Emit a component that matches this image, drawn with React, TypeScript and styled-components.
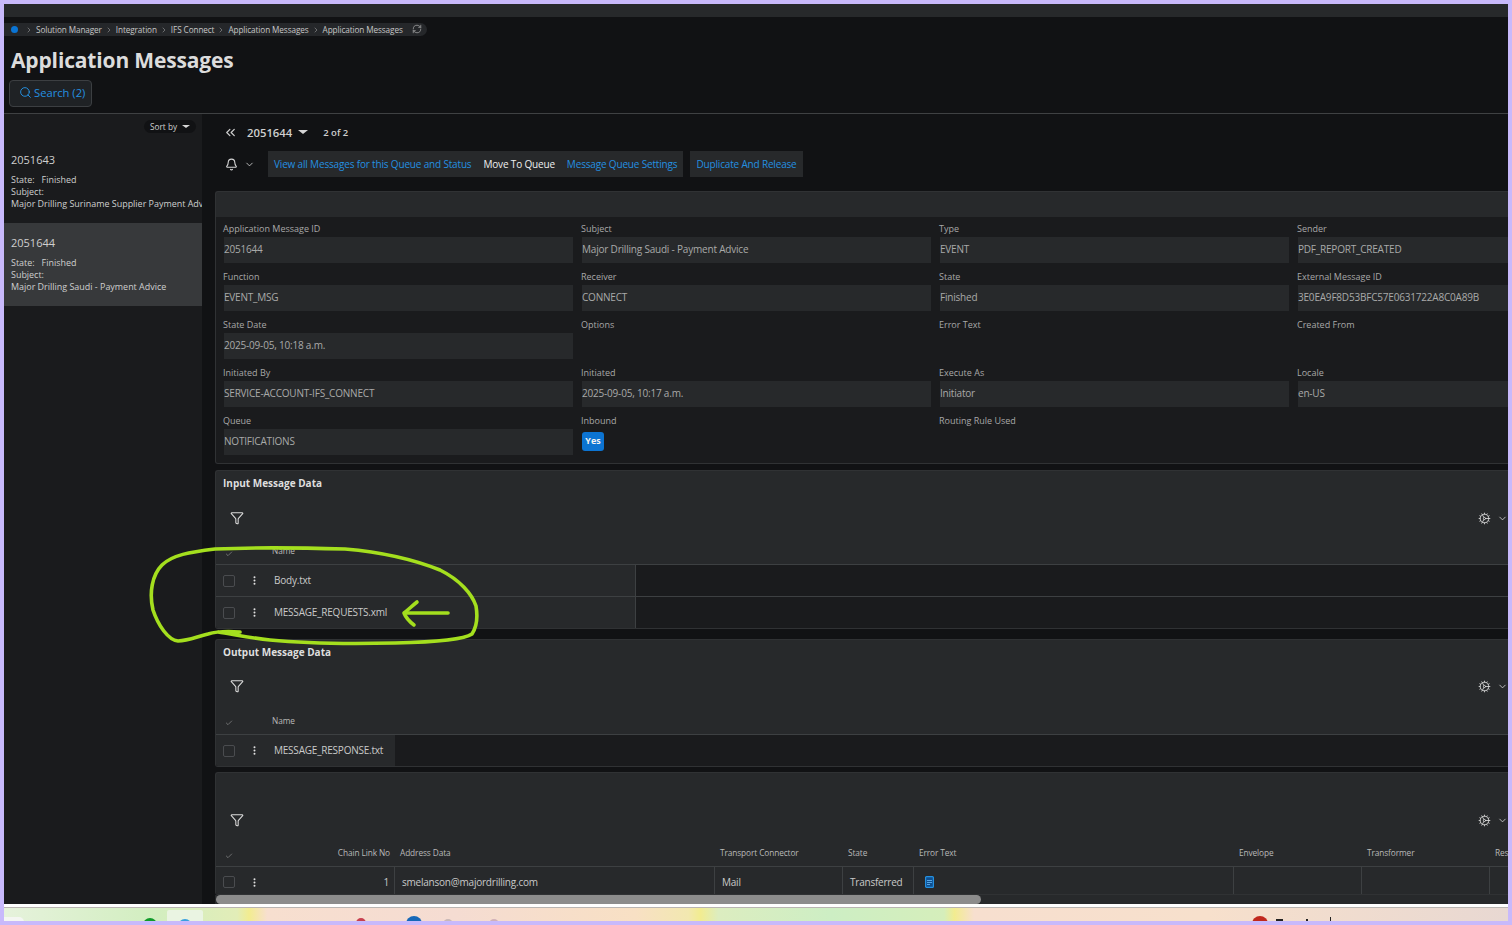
import styled, { createGlobalStyle } from "styled-components"
import {
  Bell,
  Check,
  ChevronDown,
  ChevronRight,
  ChevronsLeft,
  Cog,
  EllipsisVertical,
  Funnel,
  RefreshCw,
  Search,
} from "lucide-react"

const GlobalStyle = createGlobalStyle`
  html, body {
    margin: 0;
    padding: 0;
    background: #c8b9fb;
    font-family: "Open Sans", "Liberation Sans", sans-serif;
  }
`

const COLORS = {
  page: "#111214",
  side: "#1a1b1d",
  panel: "#27292b",
  line: "#3d4042",
  text: "#c9c9c9",
  label: "#a8a8a8",
  link: "#2490e0",
}

const Frame = styled.div`
  position: relative;
  width: 1512px;
  height: 925px;
  box-sizing: border-box;
  padding: 4px 4px 4px 4px;
  background: #c8b9fb;
  overflow: hidden;
  display: flex;
  flex-direction: column;
`

const TopBar = styled.div`
  height: 13px;
  background: ${COLORS.panel};
  flex: none;
`

const Header = styled.header`
  height: 97px;
  flex: none;
  box-sizing: border-box;
  background: ${COLORS.page};
  border-bottom: 1px solid #3f4143;
  padding-top: 6px;
`

const Crumbs = styled.nav`
  display: flex;
  align-items: center;
  height: 13px;
  width: 423px;
  box-sizing: border-box;
  padding: 0 0 1px 7px;
  background: #25272a;
  border-radius: 0 7px 7px 0;
  font-size: 8.2px;
  color: #c6c6c6;
  letter-spacing: -0.1px;
  white-space: nowrap;
`

const HomeDot = styled.span`
  flex: none;
  width: 7px;
  height: 7px;
  border-radius: 50%;
  background: #0a74d4;
  margin-right: 4px;
`

const CrumbGap = styled.span<{ $left?: number }>`
  display: inline-flex;
  vertical-align: middle;
  margin: 0 3px 0 ${(p) => p.$left ?? 3}px;
  color: #b5b5b5;
`

const Title = styled.h1`
  margin: 8px 0 0 7px;
  height: 32px;
  font-size: 21px;
  line-height: 32px;
  font-weight: 700;
  color: #dcdcdc;
  letter-spacing: -0.15px;
`

const SearchButton = styled.button`
  display: flex;
  align-items: center;
  gap: 2px;
  margin: 4px 0 0 5px;
  width: 83px;
  height: 27px;
  padding: 0 0 2px 9px;
  box-sizing: border-box;
  background: #1f2225;
  border: 1px solid #3c3f42;
  border-radius: 4px;
  color: ${COLORS.link};
  font-family: inherit;
  font-size: 11.2px;
  white-space: nowrap;
`

const Body = styled.div`
  flex: 1;
  min-height: 0;
  display: flex;
`

const Sidebar = styled.aside`
  width: 198px;
  flex: none;
  background: ${COLORS.side};
  overflow: hidden;
`

const SortRow = styled.div`
  height: 26px;
  box-sizing: border-box;
  padding: 0 6px 1px 0;
  display: flex;
  justify-content: flex-end;
  align-items: center;
`

const SortPill = styled.div`
  display: flex;
  align-items: center;
  gap: 5px;
  height: 13px;
  box-sizing: border-box;
  padding: 0 6px 1px;
  border-radius: 7px;
  background: #111214;
  color: #cfcfcf;
  font-size: 8.2px;
`

const Caret = styled.span<{ $size?: number }>`
  width: 0;
  height: 0;
  border-left: ${(p) => p.$size ?? 4}px solid transparent;
  border-right: ${(p) => p.$size ?? 4}px solid transparent;
  border-top: ${(p) => (p.$size ?? 4) * 0.8}px solid #d6d6d6;
`

const ListItem = styled.div<{ $active?: boolean }>`
  height: 83px;
  box-sizing: border-box;
  padding: 11px 0 0 7px;
  background: ${(p) => (p.$active ? "#37393b" : "transparent")};
  color: #cfcfcf;
  font-size: 8.95px;
  line-height: 12px;
  white-space: nowrap;
  overflow: hidden;
`

const ListId = styled.div`
  font-size: 11px;
  line-height: 17px;
  margin-bottom: 6px;
`

const Main = styled.main`
  flex: 1;
  min-width: 0;
  display: flex;
  flex-direction: column;
  background: ${COLORS.page};
  padding: 8px 0 0 13px;
  overflow: hidden;
`

const RecordRow = styled.div`
  height: 20px;
  flex: none;
  display: flex;
  align-items: center;
  padding-left: 8px;
  color: #cfcfcf;
`

const RecordId = styled.span`
  margin: 0 6px 0 9px;
  font-size: 11.3px;
  font-weight: 600;
`

const RecordCount = styled.span`
  margin-left: 15px;
  font-size: 9.5px;
  font-weight: 600;
`

const ActionRow = styled.div`
  height: 26px;
  flex: none;
  margin: 9px 0 14px;
  display: flex;
  align-items: center;
  color: #d6d6d6;
`

const BellBox = styled.div`
  width: 53px;
  padding-left: 10px;
  box-sizing: border-box;
  display: flex;
  align-items: center;
  gap: 6px;
`

const ActionGroup = styled.div`
  height: 26px;
  display: flex;
  align-items: center;
  gap: 12px;
  padding: 0 6px;
  margin-right: 7px;
  background: ${COLORS.panel};
`

const Action = styled.span<{ $plain?: boolean }>`
  font-size: 10px;
  letter-spacing: -0.17px;
  color: ${(p) => (p.$plain ? "#efefef" : COLORS.link)};
  white-space: nowrap;
`

const Panel = styled.section<{ $gap?: number; $height?: number }>`
  flex: none;
  width: 1400px;
  height: ${(p) => (p.$height ? `${p.$height}px` : "auto")};
  margin-bottom: ${(p) => p.$gap ?? 0}px;
  border: 1px solid #303234;
  border-width: 1px 0 1px 1px;
  box-sizing: border-box;
  border-radius: 3px 0 0 3px;
  background: ${COLORS.panel};
  overflow: hidden;
`

const PanelHead = styled.div`
  height: 25px;
  box-sizing: border-box;
  padding: 0 0 2px 7px;
  display: flex;
  align-items: center;
  font-size: 10px;
  font-weight: 700;
  color: #dedede;
`

const FormGrid = styled.div`
  display: grid;
  grid-template-columns: repeat(4, 358px);
  grid-auto-rows: 48px;
  padding: 3px 0 3px 7px;
  background: ${COLORS.side};
`

const Field = styled.div`
  min-width: 0;
`

const FieldLabel = styled.div`
  height: 17px;
  line-height: 17px;
  font-size: 9px;
  color: ${COLORS.label};
  white-space: nowrap;
`

const FieldValue = styled.div<{ $wide?: boolean }>`
  margin-left: 1px;
  height: 26px;
  width: ${(p) => (p.$wide ? 358 : 349)}px;
  line-height: 24px;
  background: ${COLORS.panel};
  color: #a9a9a9;
  font-size: 10px;
  letter-spacing: -0.2px;
  white-space: nowrap;
`

const YesBadge = styled.span`
  display: block;
  margin: 3px 0 0 1px;
  width: 22px;
  height: 19px;
  line-height: 17px;
  text-align: center;
  background: #0c74d2;
  border-radius: 3px;
  color: #f2f2f2;
  font-size: 9px;
  font-weight: 700;
`

const FilterRow = styled.div<{ $height: number }>`
  height: ${(p) => p.$height}px;
  display: flex;
  align-items: center;
  justify-content: space-between;
  padding-left: 14px;
  width: 1292px;
  box-sizing: border-box;
  color: #dcdcdc;
`

const GearBox = styled.div`
  display: flex;
  align-items: center;
  gap: 6px;
  width: 30px;
  flex: none;
  overflow: hidden;
  color: #d6d6d6;
`

const ColumnHead = styled.div<{ $cols: string; $height: number; $lift?: number }>`
  --lift: ${(p) => p.$lift ?? 0}px;
  height: ${(p) => p.$height}px;
  display: grid;
  grid-template-columns: ${(p) => p.$cols};
  align-items: center;
  border-bottom: 1px solid ${COLORS.line};
  box-sizing: content-box;
  font-size: 8.3px;
  letter-spacing: -0.1px;
  color: #b9b9b9;
  white-space: nowrap;
`

const TableRow = styled.div<{ $cols: string; $height: number; $line?: boolean }>`
  height: ${(p) => p.$height}px;
  display: grid;
  grid-template-columns: ${(p) => p.$cols};
  align-items: stretch;
  background: ${COLORS.side};
  border-bottom: ${(p) => (p.$line ? `1px solid ${COLORS.line}` : "none")};
  font-size: 10px;
  color: #c9c9c9;
`

const Cell = styled.div<{ $right?: boolean; $border?: boolean }>`
  display: flex;
  align-items: center;
  justify-content: ${(p) => (p.$right ? "flex-end" : "flex-start")};
  padding: ${(p) => (p.$right ? "0 5px 1px 0" : "0 0 1px 7px")};
  background: ${COLORS.panel};
  border-right: ${(p) => (p.$border ? `1px solid ${COLORS.line}` : "none")};
  white-space: nowrap;
  overflow: hidden;
  letter-spacing: -0.22px;
`

const HeadCell = styled.div<{ $right?: boolean }>`
  padding: ${(p) => (p.$right ? "0 5px 0 0" : "0 0 0 5px")};
  margin-bottom: var(--lift);
  text-align: ${(p) => (p.$right ? "right" : "left")};
  overflow: hidden;
`

const SelectCell = styled.div`
  display: flex;
  align-items: center;
  gap: 14px;
  padding-left: 7px;
  background: ${COLORS.panel};
  color: #e0e0e0;
`

const Tick = styled.div`
  padding: 4px 0 0 9px;
  color: #b0b0b0;
  display: flex;
  align-items: center;
`

const CheckBox = styled.span`
  width: 10px;
  height: 10px;
  border: 1px solid #4a4c4f;
  border-radius: 2px;
`

const DocBox = styled.span`
  display: flex;
  margin-left: 4px;
`

const EmptyFill = styled.div`
  background: ${COLORS.side};
  border-left: 1px solid ${COLORS.line};
`

const ScrollTrack = styled.div`
  flex: none;
  height: 9px;
  margin-top: auto;
  background: ${COLORS.panel};
`

const ScrollThumb = styled.div`
  width: 765px;
  height: 9px;
  margin-left: 1px;
  border-radius: 5px;
  background: #8c8c8c;
`

const Strip = styled.div`
  position: relative;
  flex: none;
  height: 17px;
  box-sizing: border-box;
  background: #fff;
  border-top: 3px solid #fff;
  overflow: hidden;
`

const StripFill = styled.svg`
  display: block;
  width: 1504px;
  height: 14px;
`

const Scribble = styled.svg`
  position: absolute;
  left: 0;
  top: 0;
  width: 1512px;
  height: 925px;
  pointer-events: none;
`

const FIELDS = [
  ["Application Message ID", "2051644"],
  ["Subject", "Major Drilling Saudi - Payment Advice"],
  ["Type", "EVENT"],
  ["Sender", "PDF_REPORT_CREATED"],
  ["Function", "EVENT_MSG"],
  ["Receiver", "CONNECT"],
  ["State", "Finished"],
  ["External Message ID", "3E0EA9F8D53BFC57E0631722A8C0A89B"],
  ["State Date", "2025-09-05, 10:18 a.m."],
  ["Options", ""],
  ["Error Text", ""],
  ["Created From", ""],
  ["Initiated By", "SERVICE-ACCOUNT-IFS_CONNECT"],
  ["Initiated", "2025-09-05, 10:17 a.m."],
  ["Execute As", "Initiator"],
  ["Locale", "en-US"],
  ["Queue", "NOTIFICATIONS"],
  ["Inbound", "yes"],
  ["Routing Rule Used", ""],
]

const WIDE_FIELDS = ["Sender", "Locale", "External Message ID"]

const CRUMBS = ["Solution Manager", "Integration", "IFS Connect", "Application Messages", "Application Messages"]

const NAME_COLS = "51px 368px 1fr"
const OUTPUT_COLS = "51px 128px 1fr"
const CHAIN_COLS = "52px 127px 320px 128px 71px 320px 128px 128px 1fr"

function FilterBar({ height }: { height: number }) {
  return (
    <FilterRow $height={height}>
      <Funnel size={14} strokeWidth={1.8} />
      <GearBox>
        <Cog size={13} strokeWidth={1.6} />
        <ChevronDown size={11} strokeWidth={1.8} />
      </GearBox>
    </FilterRow>
  )
}

function Selector() {
  return (
    <SelectCell>
      <CheckBox />
      <EllipsisVertical size={11} strokeWidth={2.4} />
    </SelectCell>
  )
}

function DocIcon() {
  return (
    <svg width="9" height="12" viewBox="0 0 9 12">
      <rect x="0.6" y="0.6" width="7.8" height="10.8" rx="1" fill="#0f4f8f" stroke="#2490e0" strokeWidth="1.2" />
      <path d="M2 4.5h5M2 6.5h5M2 8.5h3" stroke="#5db0ee" strokeWidth="0.9" />
    </svg>
  )
}

export default function App() {
  return (
    <>
      <GlobalStyle />
      <Frame>
        <TopBar />
        <Header>
          <Crumbs>
            <HomeDot />
            {CRUMBS.map((crumb, i) => (
              <span key={i}>
                <CrumbGap>
                  <ChevronRight size={8} strokeWidth={1.5} />
                </CrumbGap>
                {crumb}
              </span>
            ))}
            <CrumbGap $left={9}>
              <RefreshCw size={10} strokeWidth={1.6} />
            </CrumbGap>
          </Crumbs>
          <Title>Application Messages</Title>
          <SearchButton>
            <Search size={13} strokeWidth={1.8} />
            Search (2)
          </SearchButton>
        </Header>
        <Body>
          <Sidebar>
            <SortRow>
              <SortPill>
                Sort by <Caret />
              </SortPill>
            </SortRow>
            <ListItem>
              <ListId>2051643</ListId>
              <div>State:&nbsp;&nbsp; Finished</div>
              <div>Subject:</div>
              <div>Major Drilling Suriname Supplier Payment Advice</div>
            </ListItem>
            <ListItem $active>
              <ListId>2051644</ListId>
              <div>State:&nbsp;&nbsp; Finished</div>
              <div>Subject:</div>
              <div>Major Drilling Saudi - Payment Advice</div>
            </ListItem>
          </Sidebar>
          <Main>
            <RecordRow>
              <ChevronsLeft size={15} strokeWidth={2} />
              <RecordId>2051644</RecordId>
              <Caret $size={5.5} />
              <RecordCount>2 of 2</RecordCount>
            </RecordRow>
            <ActionRow>
              <BellBox>
                <Bell size={13} strokeWidth={2} />
                <ChevronDown size={11} strokeWidth={1.8} />
              </BellBox>
              <ActionGroup>
                <Action>View all Messages for this Queue and Status</Action>
                <Action $plain>Move To Queue</Action>
                <Action>Message Queue Settings</Action>
              </ActionGroup>
              <ActionGroup>
                <Action>Duplicate And Release</Action>
              </ActionGroup>
            </ActionRow>

            <Panel $gap={6}>
              <PanelHead />
              <FormGrid>
                {FIELDS.map(([label, value]) => (
                  <Field key={label}>
                    <FieldLabel>{label}</FieldLabel>
                    {value === "yes" ? (
                      <YesBadge>Yes</YesBadge>
                    ) : (
                      value && <FieldValue $wide={WIDE_FIELDS.includes(label)}>{value}</FieldValue>
                    )}
                  </Field>
                ))}
              </FormGrid>
            </Panel>

            <Panel $gap={10}>
              <PanelHead>Input Message Data</PanelHead>
              <FilterBar height={44} />
              <ColumnHead $cols={NAME_COLS} $height={24} $lift={4}>
                <Tick>
                  <Check size={8} strokeWidth={1.5} />
                </Tick>
                <HeadCell>Name</HeadCell>
              </ColumnHead>
              <TableRow $cols={NAME_COLS} $height={31} $line>
                <Selector />
                <Cell>Body.txt</Cell>
                <EmptyFill />
              </TableRow>
              <TableRow $cols={NAME_COLS} $height={31}>
                <Selector />
                <Cell>MESSAGE_REQUESTS.xml</Cell>
                <EmptyFill />
              </TableRow>
            </Panel>

            <Panel $gap={5}>
              <PanelHead>Output Message Data</PanelHead>
              <FilterBar height={42} />
              <ColumnHead $cols={OUTPUT_COLS} $height={27}>
                <Tick>
                  <Check size={8} strokeWidth={1.5} />
                </Tick>
                <HeadCell>Name</HeadCell>
              </ColumnHead>
              <TableRow $cols={OUTPUT_COLS} $height={31}>
                <Selector />
                <Cell>MESSAGE_RESPONSE.txt</Cell>
              </TableRow>
            </Panel>

            <Panel $height={123}>
              <PanelHead />
              <FilterBar height={44} />
              <ColumnHead $cols={CHAIN_COLS} $height={24} $lift={4}>
                <Tick>
                  <Check size={8} strokeWidth={1.5} />
                </Tick>
                <HeadCell $right>Chain Link No</HeadCell>
                <HeadCell>Address Data</HeadCell>
                <HeadCell>Transport Connector</HeadCell>
                <HeadCell>State</HeadCell>
                <HeadCell>Error Text</HeadCell>
                <HeadCell>Envelope</HeadCell>
                <HeadCell>Transformer</HeadCell>
                <HeadCell>Response</HeadCell>
              </ColumnHead>
              <TableRow $cols={CHAIN_COLS} $height={30}>
                <Selector />
                <Cell $right $border>1</Cell>
                <Cell $border>smelanson@majordrilling.com</Cell>
                <Cell $border>Mail</Cell>
                <Cell $border>Transferred</Cell>
                <Cell $border>
                  <DocBox>
                    <DocIcon />
                  </DocBox>
                </Cell>
                <Cell $border />
                <Cell $border />
                <Cell />
              </TableRow>
            </Panel>

            <ScrollTrack>
              <ScrollThumb />
            </ScrollTrack>
          </Main>
        </Body>
        <Strip>
          <StripFill viewBox="0 0 1504 14">
            <defs>
              <linearGradient id="wall">
                <stop offset="0" stopColor="#e6f2dc" />
                <stop offset="0.1" stopColor="#d2eec0" />
                <stop offset="0.155" stopColor="#e2edb8" />
                <stop offset="0.163" stopColor="#f2ec90" />
                <stop offset="0.175" stopColor="#f7dfcf" />
                <stop offset="0.3" stopColor="#f5dcd2" />
                <stop offset="0.42" stopColor="#f8e0c4" />
                <stop offset="0.455" stopColor="#f2e8b0" />
                <stop offset="0.463" stopColor="#f2ec90" />
                <stop offset="0.475" stopColor="#dcedc0" />
                <stop offset="0.55" stopColor="#cdeec4" />
                <stop offset="0.625" stopColor="#d5eebb" />
                <stop offset="0.632" stopColor="#f2ec90" />
                <stop offset="0.645" stopColor="#f7dfcf" />
                <stop offset="0.8" stopColor="#f7e0cc" />
                <stop offset="1" stopColor="#e8d8d2" />
              </linearGradient>
            </defs>
            <rect width="1504" height="1" fill="#b9b5b2" />
            <rect y="1" width="1504" height="13" fill="url(#wall)" />
            <rect x="-10" y="10" width="30" height="10" rx="5" fill="#f4f6f2" />
            <circle cx="146" cy="18" r="7" fill="#0f9a2a" />
            <rect x="163" y="3" width="36" height="14" rx="2" fill="#eaf4e2" />
            <circle cx="181" cy="19" r="7" fill="#38a0e0" />
            <circle cx="357" cy="16" r="5" fill="#c84050" />
            <circle cx="410" cy="17" r="8" fill="#1668b8" />
            <circle cx="444" cy="17" r="5" fill="#c8b8b8" />
            <circle cx="490" cy="17" r="5" fill="#d0b0b8" />
            <circle cx="1256" cy="17" r="8" fill="#c0281e" />
            <rect x="1272" y="12" width="7" height="2" fill="#222" />
            <rect x="1302" y="12" width="2" height="2" fill="#222" />
            <rect x="1326" y="10" width="1" height="4" fill="#222" />
          </StripFill>
        </Strip>
        <Scribble viewBox="0 0 1512 925" fill="none" stroke="#a4df1e" strokeWidth="3.6" strokeLinecap="round" strokeLinejoin="round">
          <path d="M240 632 C228 631 218 631 208 634 C196 637 188 641 178 641 C168 640 158 625 153 610 C149 593 152 575 162 565 C172 555 190 552 215 549 C260 547 310 548 345 549 C380 552 415 560 440 570 C460 580 472 594 476 606 C478 618 476 628 472 634 C465 639 440 642 395 643 C350 644 300 643 270 640 C250 638 232 634 218 632" />
          <path d="M448 613 L406 613" />
          <path d="M417 602 C412 606 408 610 404 613 C406 618 410 622 414 625" />
        </Scribble>
      </Frame>
    </>
  )
}
